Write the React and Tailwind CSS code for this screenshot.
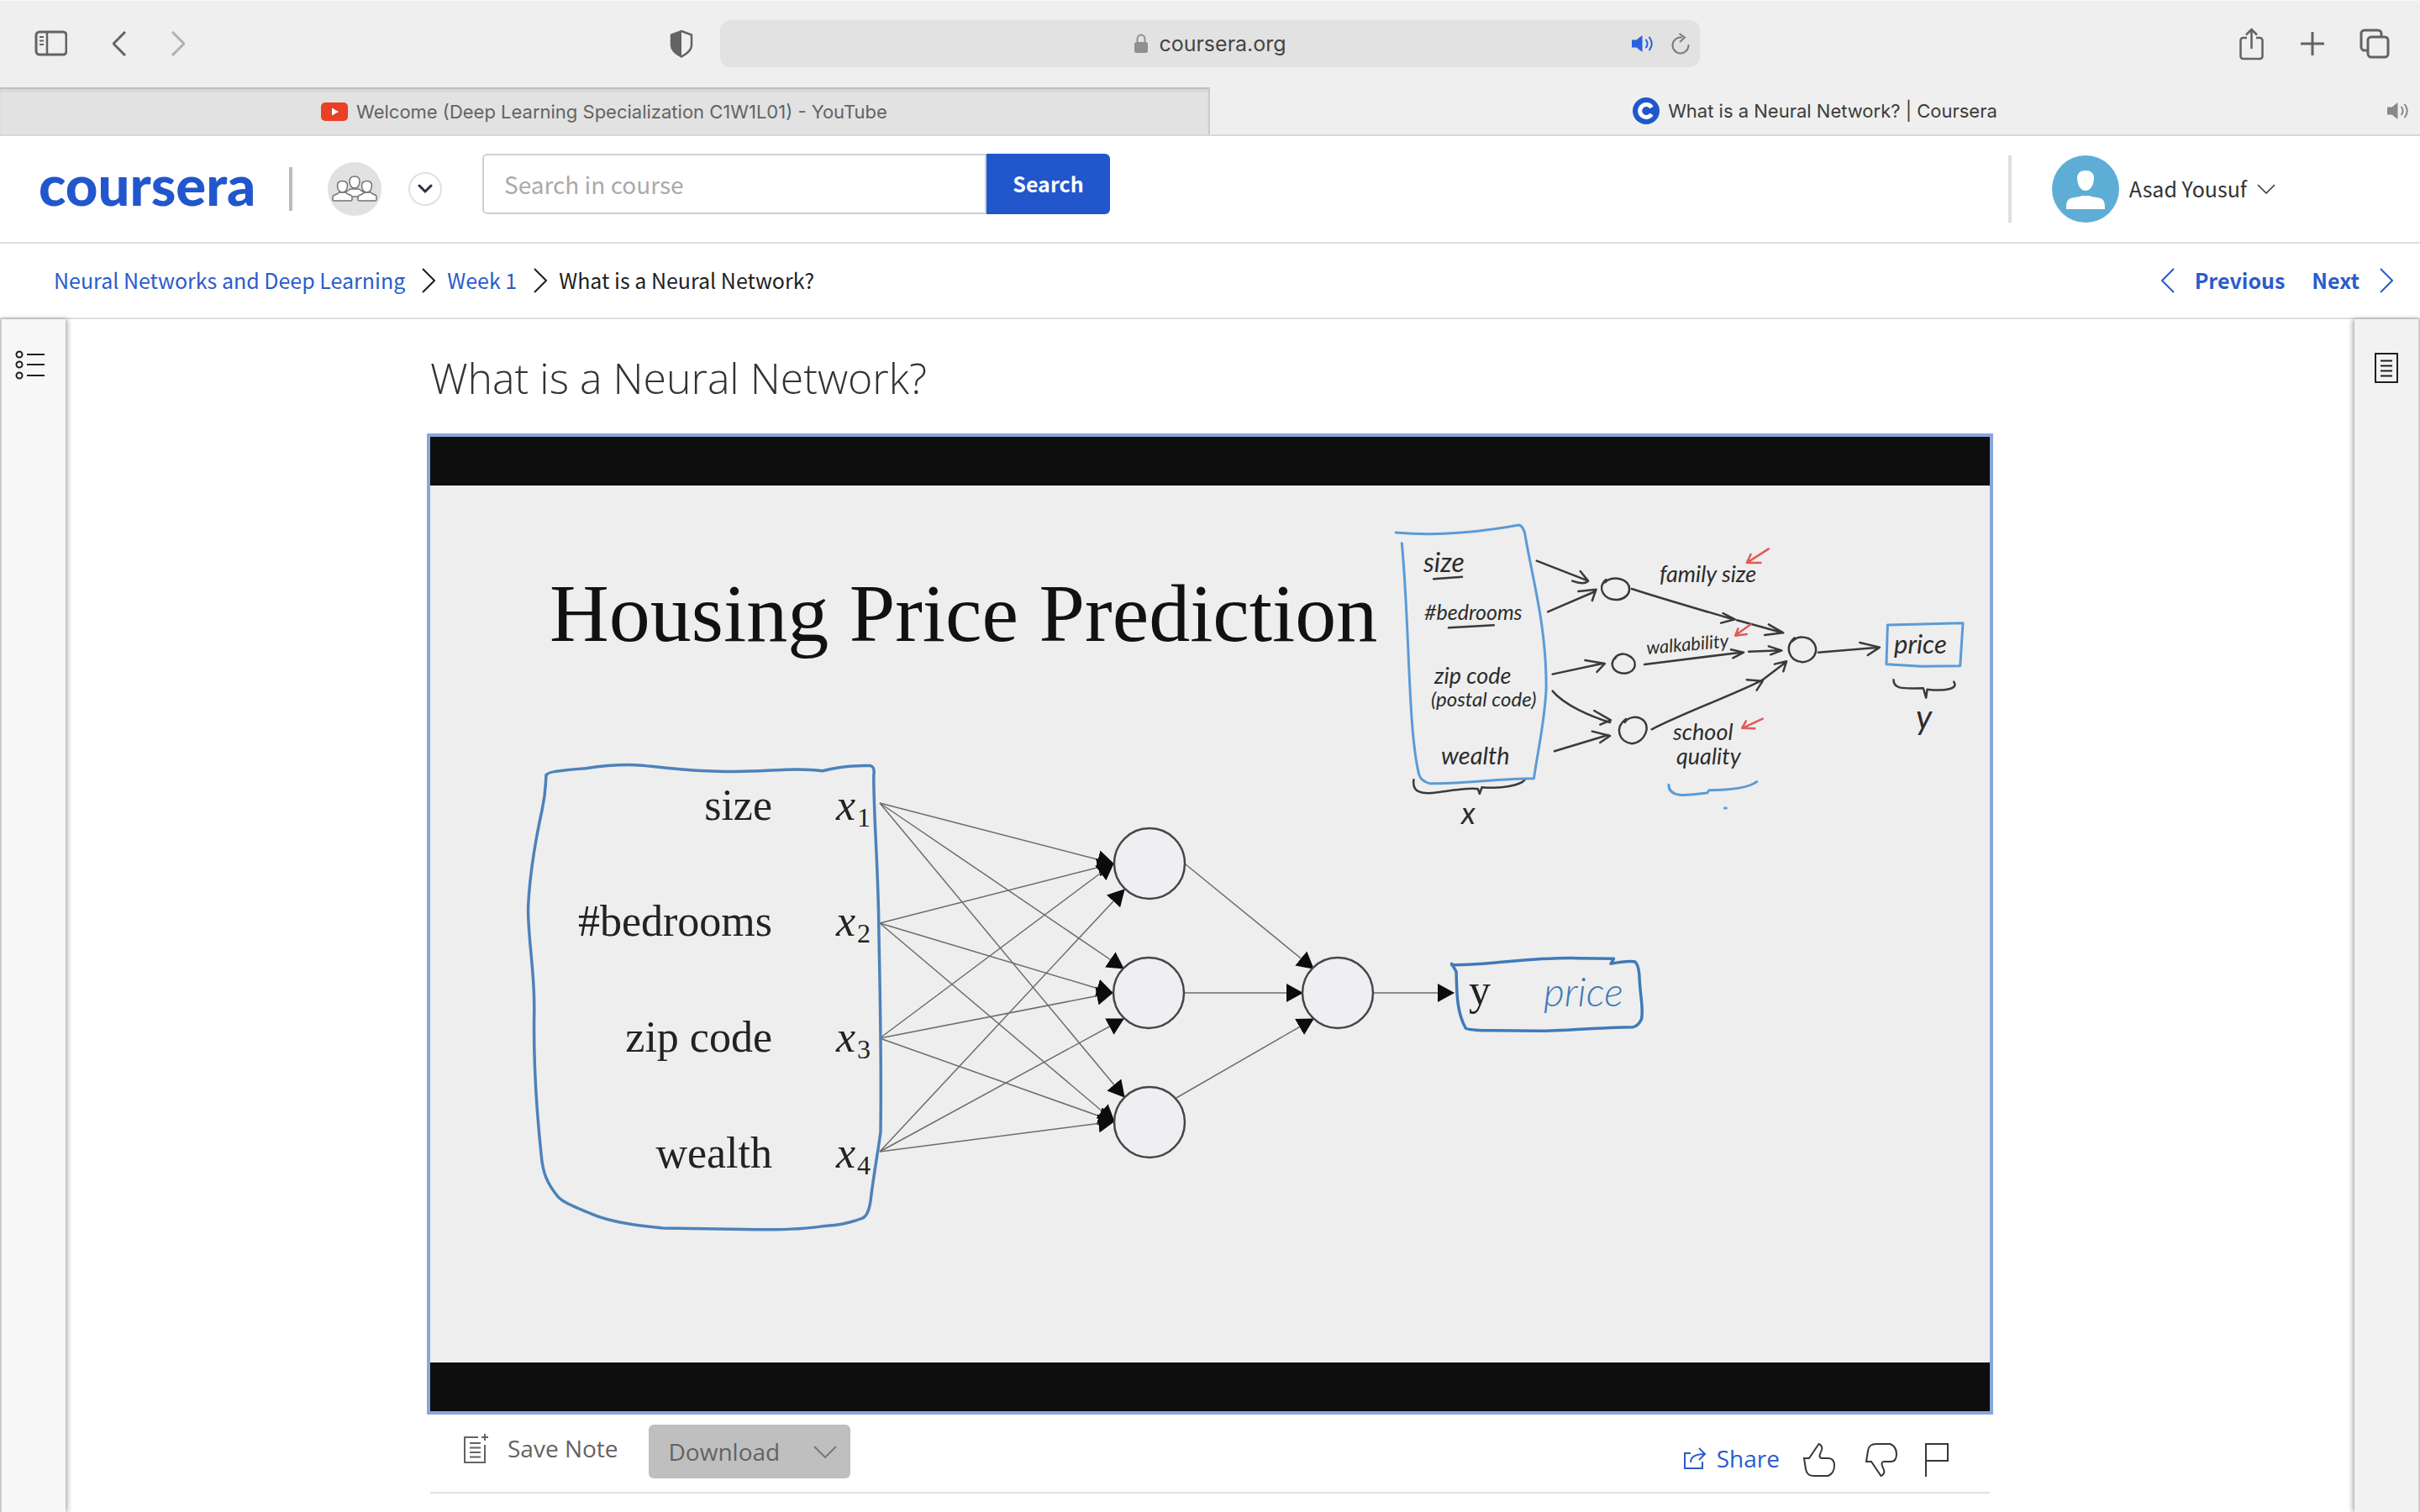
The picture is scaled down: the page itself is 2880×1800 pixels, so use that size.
const SOURCE = "font-['Noto_Sans_CJK_SC',sans-serif]";

function Icon({ w, h, className = "", sw = 2, children, ...rest }) {
  return (
    <svg
      width={w}
      height={h}
      viewBox={`0 0 ${w} ${h}`}
      fill="none"
      stroke="currentColor"
      strokeWidth={sw}
      className={`shrink-0 ${className}`}
      aria-hidden="true"
      {...rest}
    >
      {children}
    </svg>
  );
}

function Speaker({ className }) {
  return (
    <Icon w={28} h={22} className={className} sw={2}>
      <path d="M1 6.500h5.500L13.500 1v20L6.500 15.500H1z" fill="currentColor" stroke="none" />
      <path d="M18 6.500q3 4.500 0 9M22 3.500q5.500 7.500 0 15" strokeLinecap="round" />
    </Icon>
  );
}

function ChevronRight({ className, sw = 2 }) {
  return (
    <Icon w={16} h={30} className={className} sw={sw}>
      <path d="M1 1l14 14L1 29" />
    </Icon>
  );
}

function ChevronLeft({ className, sw = 2 }) {
  return (
    <Icon w={16} h={30} className={className} sw={sw}>
      <path d="M15 1L1 15l14 14" />
    </Icon>
  );
}

function Toolbar() {
  return (
    <div className="grid h-[104px] grid-cols-[1fr_minmax(0,1166px)_1fr] items-center border-t border-[#f8f8f8] pb-[2px] text-[#636363]">
      <div className="flex items-center pr-8 pl-10">
        <button aria-label="Show sidebar" className="mr-[54px]">
          <Icon w={40} h={32} sw={3}>
            <rect x="3" y="2" width="36" height="27" rx="4" />
            <path d="M16 2v27" strokeWidth="2.500" />
            <path d="M7 8h5M7 12.500h5M7 17h5" strokeWidth="2" />
          </Icon>
        </button>
        <button aria-label="Back" className="mr-[54px]">
          <ChevronLeft sw={3} />
        </button>
        <button aria-label="Forward" className="text-[#b0b0b0]">
          <ChevronRight sw={3} />
        </button>
        <button aria-label="Privacy report" className="ml-auto">
          <Icon w={28} h={34} sw={2.5}>
            <path d="M14 2L26 6.500V19c0 6-5.500 10-12 13.500C7.500 29 2 25 2 19V6.500z" />
            <path d="M14 2v30.500C7.500 29 2 25 2 19V6.500z" fill="currentColor" stroke="none" />
          </Icon>
        </button>
      </div>
      <div className="grid h-14 grid-cols-[1fr_auto_1fr] items-center rounded-xl bg-[#e2e2e2] px-3">
        <span />
        <span className="flex items-center gap-3 text-[25px] leading-8 text-[#444444]">
          <Icon w={18} h={24} className="text-[#909090]" sw={2}>
            <rect x="1" y="10" width="16" height="13" rx="2.500" fill="currentColor" stroke="none" />
            <path d="M4.500 11V6.500a4.500 5 0 0 1 9 0V11" />
          </Icon>
          coursera.org
        </span>
        <span className="flex items-center justify-end gap-5">
          <button aria-label="Mute this tab">
            <Speaker className="text-[#2a62dc]" />
          </button>
          <button aria-label="Reload">
            <Icon w={22} h={26} className="text-[#7b7b7b]" sw={2}>
              <path d="M12 5.500A9.500 9.500 0 1 0 20.500 15" strokeLinecap="round" />
              <path d="M9.500 1l6.500 4.700-6 5.300" />
            </Icon>
          </button>
        </span>
      </div>
      <div className="flex items-center justify-end gap-[42px] pr-9">
        <button aria-label="Share page">
          <Icon w={32} h={40} sw={2.5}>
            <path d="M10 13H5.500a3 3 0 0 0-3 3v19a3 3 0 0 0 3 3h20a3 3 0 0 0 3-3V16a3 3 0 0 0-3-3H21" />
            <path d="M15.500 26V3M9 9.500L15.500 3 22 9.500" />
          </Icon>
        </button>
        <button aria-label="New tab">
          <Icon w={28} h={28} sw={3}>
            <path d="M14 1v26M1 14h26" strokeLinecap="round" />
          </Icon>
        </button>
        <button aria-label="Show all tabs">
          <Icon w={36} h={36} sw={3}>
            <rect x="10" y="10" width="24" height="24" rx="4" />
            <path d="M9.500 26H6a4 4 0 0 1-4-4V6a4 4 0 0 1 4-4h16a4 4 0 0 1 4 4v3.500" />
          </Icon>
        </button>
      </div>
    </div>
  );
}

function BrowserTabs() {
  return (
    <div role="tablist" className="grid h-[58px] grid-cols-2 border-b-2 border-[#d8d8d8] text-[22px] leading-7">
      <button
        role="tab"
        aria-selected="false"
        className="flex items-center justify-center gap-[10px] border-t-2 border-r-2 border-t-[#bfbfbf] border-r-[#cccccc] bg-[#e2e2e2] text-[#636363] shadow-[inset_0_3px_3px_rgba(0,0,0,0.06)]"
      >
        <Icon w={32} h={22} sw={2}>
          <rect width="32" height="22" rx="5" fill="#ea4025" stroke="none" />
          <path d="M13 6.500l8 4.500-8 4.500z" fill="#ffffff" stroke="none" />
        </Icon>
        Welcome (Deep Learning Specialization C1W1L01) - YouTube
      </button>
      <div className="grid grid-cols-[1fr_auto_1fr] items-center text-[#3c3c3c]">
        <span />
        <button role="tab" aria-selected="true" className="flex items-center gap-[10px]">
          <Icon w={32} h={32} sw={5}>
            <circle cx="16" cy="16" r="16" fill="#2156cd" stroke="none" />
            <path d="M22.500 12A7.500 7.500 0 1 0 22.500 20" stroke="#ffffff" />
          </Icon>
          What is a Neural Network? | Coursera
        </button>
        <button aria-label="Mute this tab" className="justify-self-end pr-3">
          <Speaker className="text-[#888888]" />
        </button>
      </div>
    </div>
  );
}

function SiteHeader() {
  return (
    <header className={`flex h-32 items-center border-b-2 border-[#dfdfdf] bg-white pr-[172px] pl-[46px] ${SOURCE}`}>
      <a
        href="#home"
        className="-mt-3 mr-10 w-[258px] font-['Lato',sans-serif] text-[67px] leading-[80px] font-black text-[#2156cd]"
      >
        coursera
      </a>
      <span className="mr-[42px] h-[52px] w-1 bg-[#bbbbbb]" />
      <button aria-label="Groups" className="mr-8 grid size-16 place-items-center rounded-full bg-[#e1e1e1] text-[#707474]">
        <Icon w={54} h={32} sw={1.5} fill="#ffffff">
          <path d="M16 20l6-4h10l6 4v5H16z" />
          <path d="M27 1c4 0 6 2.500 6 6 0 4.500-2.500 8-6 8s-6-3.500-6-8c0-3.500 2-6 6-6z" />
          <path d="M1 30v-4c0-2 1-2.500 5-4l3-2h7l3 2c4 1.500 5 2 5 4v2c0 1.500-.5 2-2 2H3c-1.500 0-2-.5-2-1z" />
          <path d="M31 30v-4c0-2 1-2.500 5-4l3-2h7l3 2c4 1.500 4 2 4 4v3c0 .5-.5 1-2 1H33c-1.500 0-2-.5-2-1z" />
          <path d="M12.500 6.500c3.500 0 6 2 6 5.500 0 4.500-2.500 8-6 8s-6-3.500-6-8c0-3.500 2.500-5.500 6-5.500zM41.500 6.500c3.500 0 6 2 6 5.500 0 4.500-2.500 8-6 8s-6-3.500-6-8c0-3.500 2.500-5.500 6-5.500z" />
        </Icon>
      </button>
      <button
        aria-label="Switch program"
        className="mr-12 grid size-10 place-items-center rounded-full border-2 border-[#e1e1e1] text-[#2d2f3b]"
      >
        <Icon w={18} h={12} sw={3}>
          <path d="M2 2l7 7 7-7" strokeLinecap="round" />
        </Icon>
      </button>
      <form className="-mt-3 flex h-[72px] w-full max-w-[747px]" onSubmit={(e) => e.preventDefault()}>
        <input
          type="text"
          aria-label="Search in course"
          placeholder="Search in course"
          className="min-w-0 flex-1 rounded-l-md border-2 border-[#c9d0d6] pl-6 text-[28px] text-[#1f1f1f] placeholder:text-[#aaaaaa]"
        />
        <button className="w-[147px] rounded-r-md bg-[#2156cd] text-[25px] font-bold text-white">Search</button>
      </form>
      <span className="mr-12 ml-auto h-20 w-1 bg-[#dfdfdf]" />
      <button className="flex shrink-0 items-center gap-3 text-[25px] text-[#333333]">
        <Icon w={80} h={80}>
          <circle cx="40" cy="40" r="40" fill="#5eadd7" stroke="none" />
          <path
            d="M40 18c6 0 10 3 10 9 0 8-4 15-10 15s-10-7-10-15c0-6 4-9 10-9zM17 64c0-9 1-12 7-13.500 7-1 9-1.500 12-2.500h8c3 1 5 1.500 12 2.500 6 1.500 7 4.500 7 13.500z"
            fill="#ffffff"
            stroke="none"
          />
        </Icon>
        <span>Asad Yousuf</span>
        <Icon w={22} h={12} sw={1.5}>
          <path d="M1 1l10 10L21 1" />
        </Icon>
      </button>
    </header>
  );
}

function Breadcrumbs() {
  return (
    <div
      className={`flex h-[90px] items-center justify-between border-b-2 border-[#dfdfdf] bg-white pr-8 pl-16 text-[25px] text-[#2a5ccc] ${SOURCE}`}
    >
      <nav aria-label="Breadcrumb" className="flex items-center">
        <a href="#course">Neural Networks and Deep Learning</a>
        <ChevronRight className="mr-[14px] ml-5 text-[#1f1f1f]" />
        <a href="#week-1">Week 1</a>
        <ChevronRight className="mr-[14px] ml-5 text-[#1f1f1f]" />
        <span className="text-[#1f1f1f]">What is a Neural Network?</span>
      </nav>
      <nav aria-label="Lesson" className="flex items-center gap-8 font-bold">
        <a href="#previous" className="flex items-center gap-6">
          <ChevronLeft />
          Previous
        </a>
        <a href="#next" className="flex items-center gap-6">
          Next
          <ChevronRight />
        </a>
      </nav>
    </div>
  );
}

const EDGES = [
  [1047, 956, 1325, 1028], [1047, 956, 1337, 1153], [1047, 956, 1338, 1306],
  [1047, 1099, 1325, 1028], [1047, 1099, 1324, 1182], [1047, 1099, 1326, 1335],
  [1047, 1236, 1325, 1028], [1047, 1236, 1324, 1182], [1047, 1236, 1326, 1335],
  [1047, 1371, 1338, 1059], [1047, 1371, 1337, 1213], [1047, 1371, 1326, 1335],
  [1411, 1029, 1563, 1153], [1410, 1182, 1550, 1182], [1400, 1307, 1563, 1213],
  [1635, 1182, 1730, 1182],
];

const NODES = [[1368, 1028], [1367, 1182], [1368, 1336], [1592, 1182]];

const FEATURES = [
  ["size", 976, "1"],
  ["#bedrooms", 1114, "2"],
  ["zip code", 1252, "3"],
  ["wealth", 1390, "4"],
];

const NOTES = [
  [1694, 681, 32, "size"],
  [1695, 738, 25, "#bedrooms"],
  [1707, 814, 27, "zip code"],
  [1703, 841, 24, "(postal code)"],
  [1715, 910, 29, "wealth"],
  [1975, 693, 27, "family size"],
  [1991, 881, 27, "school"],
  [1995, 910, 27, "quality"],
  [2254, 778, 31, "price"],
  [2280, 868, 40, "y"],
  [1739, 981, 36, "x"],
];

const INK = [
  "M400 203L525 272M490 275q30 15 40 0L510 240",
  "M428 385L548 312M505 312L550 305L540 345",
  "M440 608L565 570M522 558L572 570L552 600",
  "M440 668C470 720 540 760 585 780M545 738L587 772L560 788",
  "M445 883L580 825M540 812L585 828L560 852",
  "M640 303C720 340 820 380 895 412M870 390L900 412L865 425",
  "M905 415L1020 460M985 430L1022 460L975 468",
  "M672 573L915 530M890 520L922 530L895 550",
  "M935 527L1015 523M985 508L1018 523L990 538",
  "M690 805C780 740 900 680 968 630M930 628L970 632L955 665",
  "M968 630L1030 563M1000 572L1030 562L1022 598",
  "M1110 530L1262 512M1215 495L1265 512L1235 540",
  "M575 270C550 300 570 345 605 342C640 335 645 280 610 268C595 262 580 268 572 280",
  "M600 545C580 575 595 605 622 605C655 600 655 555 630 540C615 530 600 540 598 552",
  "M625 768C595 800 608 850 640 856C675 850 690 790 665 768C650 755 630 762 622 780",
  "M1050 478C1025 510 1035 560 1070 565C1110 560 1115 500 1085 480C1070 472 1055 475 1045 490",
  "M140 268L212 260M178 442L292 433",
  "M90 985C85 1030 110 1038 150 1030C190 1022 235 1012 252 1018L256 1035L262 1012C310 1018 360 1005 370 985",
  "M1300 628C1300 665 1330 658 1375 658L1382 692L1385 662C1430 670 1465 660 1452 635",
];

const BLUE_INK = [
  "M45 102C150 115 260 100 355 75Q368 78 372 120C390 270 425 440 424 660C420 780 403 880 393 980C300 980 210 1002 130 998Q108 990 103 965C75 800 80 440 60 140",
  "M1285 432L1475 425L1468 578L1370 580L1282 572Z",
  "M733 1003C733 1050 775 1042 830 1032L835 1022C880 1022 930 1018 955 992",
  "M874 1086h4",
];

const RED_INK = ["M985 160L932 208M940 180L930 210L965 210", "M940 430L902 468M908 445L901 470L930 465", "M970 767L920 800M928 775L918 800L950 802"];

function Strokes({ paths, ...rest }) {
  return (
    <g fill="none" strokeLinecap="round" strokeLinejoin="round" {...rest}>
      {paths.map((d) => (
        <path key={d} d={d} vectorEffect="non-scaling-stroke" />
      ))}
    </g>
  );
}

function Slide() {
  return (
    <svg viewBox="512 578 1856 1044" className="block w-full bg-[#eeeeee]" role="img" aria-label="Housing Price Prediction">
      <defs>
        <marker id="head" markerUnits="userSpaceOnUse" markerWidth="20" markerHeight="22" refX="19" refY="11" orient="auto">
          <path d="M0 0L20 11L0 22z" fill="#0d0b0e" />
        </marker>
      </defs>

      <text x="654" y="763" className="fill-[#111111] font-['Liberation_Serif',serif] text-[98px]">
        Housing Price Prediction
      </text>

      <g className="fill-[#222222] font-['Liberation_Serif',serif] text-[52px]">
        {FEATURES.map(([label, y, n]) => (
          <g key={label}>
            <text x="919" y={y} textAnchor="end">{label}</text>
            <text x="995" y={y} className="italic">x</text>
            <text x="1020" y={y + 8} className="text-[32px]">{n}</text>
          </g>
        ))}
        <text x="1748" y="1196">y</text>
      </g>

      <g stroke="#6d6b6e" strokeWidth="1.500">
        {EDGES.map(([x1, y1, x2, y2]) => (
          <line key={`${x1}-${y1}-${x2}-${y2}`} x1={x1} y1={y1} x2={x2} y2={y2} markerEnd="url(#head)" />
        ))}
      </g>
      <g fill="#efeef0" stroke="#474549" strokeWidth="2.500">
        {NODES.map(([cx, cy]) => (
          <circle key={`${cx}-${cy}`} cx={cx} cy={cy} r="42" />
        ))}
      </g>

      <Strokes
        transform="translate(600 881) scale(0.5102 0.3827)"
        stroke="#4c82b9"
        strokeWidth="3.500"
        paths={[
          "M100 108C100 100 130 94 190 88C240 78 290 74 330 80C400 90 450 98 540 98C620 98 680 84 742 96C780 84 820 78 855 80Q865 84 862 110C862 250 873 400 874 600C878 850 880 1050 878 1220C872 1280 860 1370 855 1430Q850 1480 835 1488C800 1505 780 1508 745 1512C700 1522 620 1524 560 1522L370 1518C300 1510 240 1495 205 1475C150 1445 135 1435 125 1420C95 1370 92 1340 88 1310C75 1150 68 1000 70 850C72 720 55 620 56 520C60 400 75 300 88 220C98 160 96 140 98 108",
        ]}
      />
      <Strokes
        transform="translate(1300 940) scale(0.4464 0.3333)"
        stroke="#3f7ab8"
        strokeWidth="3.500"
        paths={[
          "M958 626C1060 628 1150 600 1290 602L1390 604L1382 622C1410 614 1430 612 1445 614Q1455 620 1458 660C1460 740 1470 780 1464 820Q1455 845 1442 848C1340 850 1260 862 1190 862L1040 860Q1000 858 995 852C970 790 972 720 970 650L958 622",
        ]}
      />
      <text x="1837" y="1198" className="fill-[#3f7ab8] font-['Lato',sans-serif] text-[48px] font-light italic">price</text>

      <g transform="translate(1640 600) scale(0.4719 0.3333)">
        <Strokes stroke="#3a3a3a" strokeWidth="2.500" paths={INK} />
        <Strokes stroke="#5b9bd5" strokeWidth="3" paths={BLUE_INK} />
        <Strokes stroke="#e05a5a" strokeWidth="2.500" paths={RED_INK} />
      </g>
      <g className="fill-[#2c2c2c] font-['Lato',sans-serif] italic">
        {NOTES.map(([x, y, size, label]) => (
          <text key={label} x={x} y={y} fontSize={size}>{label}</text>
        ))}
        <text x="1960" y="779" fontSize="22" transform="rotate(-5 1960 779)">walkability</text>
      </g>
    </svg>
  );
}

function Lesson() {
  return (
    <main className="mx-auto w-full max-w-[1864px] font-['Open_Sans',sans-serif]">
      <h1 className="mt-9 mb-8 pl-1 text-[50px] leading-[68px] font-light text-[#333333]">What is a Neural Network?</h1>
      <div className="border-4 border-[#88a6dc] bg-[#0e0e0e] py-[58px]">
        <Slide />
      </div>
      <div className="mx-1 flex h-[94px] items-center justify-between border-b-2 border-[#e1e1e1]">
        <div className="flex items-center pb-1 text-[28px] leading-9 text-[#636363]">
          <button className="mr-9 flex items-center gap-[22px] pb-2 pl-10">
            <Icon w={30} h={36} sw={2}>
              <path d="M17 5H1v30h24V14" />
              <path d="M7 12h13M7 17.500h13M7 23h13M7 28.500h13" />
              <path d="M25 1v8M21 5h8" />
            </Icon>
            Save Note
          </button>
          <button className="flex h-16 w-60 items-center justify-between rounded-md bg-[#bfbfbf] pr-4 pl-6">
            Download
            <Icon w={28} h={15} sw={2} className="text-[#777777]">
              <path d="M1 1l13 13L27 1" />
            </Icon>
          </button>
        </div>
        <div className="mt-4 flex items-center pr-12 text-[#35373f]">
          <button className="mr-7 flex items-center gap-3 pb-1 text-[28px] leading-9 text-[#2a5ccc]">
            <Icon w={28} h={26} sw={2}>
              <path d="M9 7H2v18h21v-8" />
              <path d="M9 18C9 11 15 8 26 8M19 1l7 7-7 7" />
            </Icon>
            Share
          </button>
          <button aria-label="Like" className="mr-9">
            <Icon w={38} h={40} sw={2}>
              <path d="M1 18h6L18.500 1c3 1 4.500 4 3.500 7l-2 5c-1 3-.5 4.500 2 5h8c5 0 7 4 7 9 0 6-3 10-7.500 12H13C7 39 4 37 3 31z" />
            </Icon>
          </button>
          <button aria-label="Dislike" className="mr-8">
            <Icon w={38} h={40} sw={2}>
              <path d="M1 22h6l11.500 17c3-1 4.500-4 3.500-7l-2-5c-1-3-.5-4.500 2-5h8c5 0 7-4 7-9 0-6-3-10-7.500-12H13C7 1 4 3 3 9z" />
            </Icon>
          </button>
          <button aria-label="Report a problem">
            <Icon w={30} h={40} sw={2}>
              <path d="M2 40V1h26v20H2" />
            </Icon>
          </button>
        </div>
      </div>
    </main>
  );
}

export default function App() {
  return (
    <div className="flex min-h-screen flex-col bg-white font-['Inter',sans-serif]">
      <div className="bg-[#efefef]">
        <Toolbar />
        <BrowserTabs />
      </div>
      <SiteHeader />
      <Breadcrumbs />
      <div className="flex flex-1">
        <aside className="flex w-[78px] shrink-0 border-l-2 border-[#cccccc] bg-[#f7f7f7] pt-9 pl-4 text-[#1f1f1f] shadow-[2px_0_6px_rgba(0,0,0,0.35)]">
          <button aria-label="Open lesson list" className="h-9">
            <Icon w={36} h={36} sw={2}>
              <circle cx="5" cy="6" r="3.500" />
              <circle cx="5" cy="18" r="3.500" />
              <circle cx="5" cy="31" r="3.500" />
              <path d="M14 6h21M14 18h21M14 31h21" />
            </Icon>
          </button>
        </aside>
        <Lesson />
        <aside className="flex w-[78px] shrink-0 justify-center border-r-2 border-[#cccccc] bg-[#f2f2f2] pt-10 text-[#1f1f1f] shadow-[-2px_0_6px_rgba(0,0,0,0.35)]">
          <button aria-label="Open notes" className="h-9">
            <Icon w={28} h={36} sw={2}>
              <rect x="1" y="1" width="26" height="34" />
              <path d="M7 9.500h14M7 15.500h14M7 21.500h14M7 27.500h14" />
            </Icon>
          </button>
        </aside>
      </div>
    </div>
  );
}
